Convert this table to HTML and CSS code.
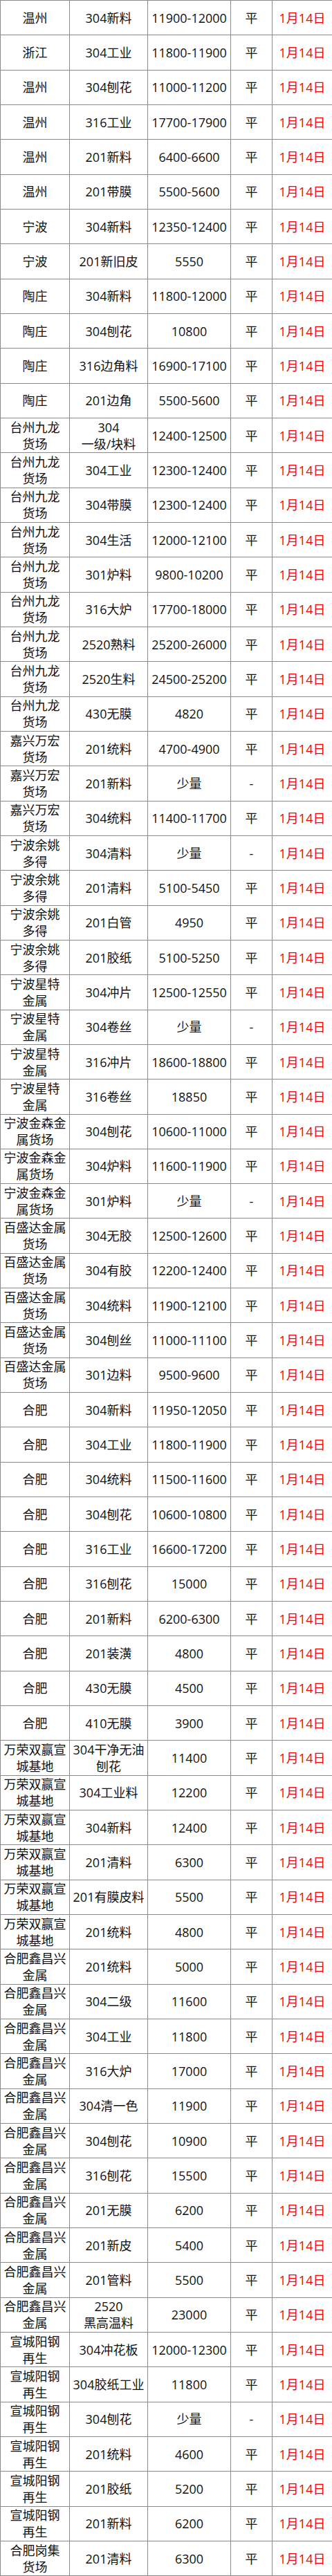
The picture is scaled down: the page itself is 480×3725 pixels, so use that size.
FILE: index.html
```html
<!DOCTYPE html>
<html lang="zh-CN">
<head>
<meta charset="utf-8">
<title>不锈钢废料价格</title>
<link rel="stylesheet" href="styles.css">
</head>
<body>
<table class="price-table">
<colgroup>
<col class="c-loc"><col class="c-prod"><col class="c-price"><col class="c-chg"><col class="c-date">
</colgroup>
<tbody>
<tr><td>温州</td><td>304新料</td><td>11900-12000</td><td>平</td><td class="date">1月14日</td></tr>
<tr><td>浙江</td><td>304工业</td><td>11800-11900</td><td>平</td><td class="date">1月14日</td></tr>
<tr><td>温州</td><td>304刨花</td><td>11000-11200</td><td>平</td><td class="date">1月14日</td></tr>
<tr><td>温州</td><td>316工业</td><td>17700-17900</td><td>平</td><td class="date">1月14日</td></tr>
<tr><td>温州</td><td>201新料</td><td>6400-6600</td><td>平</td><td class="date">1月14日</td></tr>
<tr><td>温州</td><td>201带膜</td><td>5500-5600</td><td>平</td><td class="date">1月14日</td></tr>
<tr><td>宁波</td><td>304新料</td><td>12350-12400</td><td>平</td><td class="date">1月14日</td></tr>
<tr><td>宁波</td><td>201新旧皮</td><td>5550</td><td>平</td><td class="date">1月14日</td></tr>
<tr><td>陶庄</td><td>304新料</td><td>11800-12000</td><td>平</td><td class="date">1月14日</td></tr>
<tr><td>陶庄</td><td>304刨花</td><td>10800</td><td>平</td><td class="date">1月14日</td></tr>
<tr><td>陶庄</td><td>316边角料</td><td>16900-17100</td><td>平</td><td class="date">1月14日</td></tr>
<tr><td>陶庄</td><td>201边角</td><td>5500-5600</td><td>平</td><td class="date">1月14日</td></tr>
<tr><td>台州九龙<br>货场</td><td>304<br>一级/块料</td><td>12400-12500</td><td>平</td><td class="date">1月14日</td></tr>
<tr><td>台州九龙<br>货场</td><td>304工业</td><td>12300-12400</td><td>平</td><td class="date">1月14日</td></tr>
<tr><td>台州九龙<br>货场</td><td>304带膜</td><td>12300-12400</td><td>平</td><td class="date">1月14日</td></tr>
<tr><td>台州九龙<br>货场</td><td>304生活</td><td>12000-12100</td><td>平</td><td class="date">1月14日</td></tr>
<tr><td>台州九龙<br>货场</td><td>301炉料</td><td>9800-10200</td><td>平</td><td class="date">1月14日</td></tr>
<tr><td>台州九龙<br>货场</td><td>316大炉</td><td>17700-18000</td><td>平</td><td class="date">1月14日</td></tr>
<tr><td>台州九龙<br>货场</td><td>2520熟料</td><td>25200-26000</td><td>平</td><td class="date">1月14日</td></tr>
<tr><td>台州九龙<br>货场</td><td>2520生料</td><td>24500-25200</td><td>平</td><td class="date">1月14日</td></tr>
<tr><td>台州九龙<br>货场</td><td>430无膜</td><td>4820</td><td>平</td><td class="date">1月14日</td></tr>
<tr><td>嘉兴万宏<br>货场</td><td>201统料</td><td>4700-4900</td><td>平</td><td class="date">1月14日</td></tr>
<tr><td>嘉兴万宏<br>货场</td><td>201新料</td><td>少量</td><td>-</td><td class="date">1月14日</td></tr>
<tr><td>嘉兴万宏<br>货场</td><td>304统料</td><td>11400-11700</td><td>平</td><td class="date">1月14日</td></tr>
<tr><td>宁波余姚<br>多得</td><td>304清料</td><td>少量</td><td>-</td><td class="date">1月14日</td></tr>
<tr><td>宁波余姚<br>多得</td><td>201清料</td><td>5100-5450</td><td>平</td><td class="date">1月14日</td></tr>
<tr><td>宁波余姚<br>多得</td><td>201白管</td><td>4950</td><td>平</td><td class="date">1月14日</td></tr>
<tr><td>宁波余姚<br>多得</td><td>201胶纸</td><td>5100-5250</td><td>平</td><td class="date">1月14日</td></tr>
<tr><td>宁波星特<br>金属</td><td>304冲片</td><td>12500-12550</td><td>平</td><td class="date">1月14日</td></tr>
<tr><td>宁波星特<br>金属</td><td>304卷丝</td><td>少量</td><td>-</td><td class="date">1月14日</td></tr>
<tr><td>宁波星特<br>金属</td><td>316冲片</td><td>18600-18800</td><td>平</td><td class="date">1月14日</td></tr>
<tr><td>宁波星特<br>金属</td><td>316卷丝</td><td>18850</td><td>平</td><td class="date">1月14日</td></tr>
<tr><td>宁波金森金<br>属货场</td><td>304刨花</td><td>10600-11000</td><td>平</td><td class="date">1月14日</td></tr>
<tr><td>宁波金森金<br>属货场</td><td>304炉料</td><td>11600-11900</td><td>平</td><td class="date">1月14日</td></tr>
<tr><td>宁波金森金<br>属货场</td><td>301炉料</td><td>少量</td><td>-</td><td class="date">1月14日</td></tr>
<tr><td>百盛达金属<br>货场</td><td>304无胶</td><td>12500-12600</td><td>平</td><td class="date">1月14日</td></tr>
<tr><td>百盛达金属<br>货场</td><td>304有胶</td><td>12200-12400</td><td>平</td><td class="date">1月14日</td></tr>
<tr><td>百盛达金属<br>货场</td><td>304统料</td><td>11900-12100</td><td>平</td><td class="date">1月14日</td></tr>
<tr><td>百盛达金属<br>货场</td><td>304刨丝</td><td>11000-11100</td><td>平</td><td class="date">1月14日</td></tr>
<tr><td>百盛达金属<br>货场</td><td>301边料</td><td>9500-9600</td><td>平</td><td class="date">1月14日</td></tr>
<tr><td>合肥</td><td>304新料</td><td>11950-12050</td><td>平</td><td class="date">1月14日</td></tr>
<tr><td>合肥</td><td>304工业</td><td>11800-11900</td><td>平</td><td class="date">1月14日</td></tr>
<tr><td>合肥</td><td>304统料</td><td>11500-11600</td><td>平</td><td class="date">1月14日</td></tr>
<tr><td>合肥</td><td>304刨花</td><td>10600-10800</td><td>平</td><td class="date">1月14日</td></tr>
<tr><td>合肥</td><td>316工业</td><td>16600-17200</td><td>平</td><td class="date">1月14日</td></tr>
<tr><td>合肥</td><td>316刨花</td><td>15000</td><td>平</td><td class="date">1月14日</td></tr>
<tr><td>合肥</td><td>201新料</td><td>6200-6300</td><td>平</td><td class="date">1月14日</td></tr>
<tr><td>合肥</td><td>201装潢</td><td>4800</td><td>平</td><td class="date">1月14日</td></tr>
<tr><td>合肥</td><td>430无膜</td><td>4500</td><td>平</td><td class="date">1月14日</td></tr>
<tr><td>合肥</td><td>410无膜</td><td>3900</td><td>平</td><td class="date">1月14日</td></tr>
<tr><td>万荣双赢宣<br>城基地</td><td>304干净无油<br>刨花</td><td>11400</td><td>平</td><td class="date">1月14日</td></tr>
<tr><td>万荣双赢宣<br>城基地</td><td>304工业料</td><td>12200</td><td>平</td><td class="date">1月14日</td></tr>
<tr><td>万荣双赢宣<br>城基地</td><td>304新料</td><td>12400</td><td>平</td><td class="date">1月14日</td></tr>
<tr><td>万荣双赢宣<br>城基地</td><td>201清料</td><td>6300</td><td>平</td><td class="date">1月14日</td></tr>
<tr><td>万荣双赢宣<br>城基地</td><td>201有膜皮料</td><td>5500</td><td>平</td><td class="date">1月14日</td></tr>
<tr><td>万荣双赢宣<br>城基地</td><td>201统料</td><td>4800</td><td>平</td><td class="date">1月14日</td></tr>
<tr><td>合肥鑫昌兴<br>金属</td><td>201统料</td><td>5000</td><td>平</td><td class="date">1月14日</td></tr>
<tr><td>合肥鑫昌兴<br>金属</td><td>304二级</td><td>11600</td><td>平</td><td class="date">1月14日</td></tr>
<tr><td>合肥鑫昌兴<br>金属</td><td>304工业</td><td>11800</td><td>平</td><td class="date">1月14日</td></tr>
<tr><td>合肥鑫昌兴<br>金属</td><td>316大炉</td><td>17000</td><td>平</td><td class="date">1月14日</td></tr>
<tr><td>合肥鑫昌兴<br>金属</td><td>304清一色</td><td>11900</td><td>平</td><td class="date">1月14日</td></tr>
<tr><td>合肥鑫昌兴<br>金属</td><td>304刨花</td><td>10900</td><td>平</td><td class="date">1月14日</td></tr>
<tr><td>合肥鑫昌兴<br>金属</td><td>316刨花</td><td>15500</td><td>平</td><td class="date">1月14日</td></tr>
<tr><td>合肥鑫昌兴<br>金属</td><td>201无膜</td><td>6200</td><td>平</td><td class="date">1月14日</td></tr>
<tr><td>合肥鑫昌兴<br>金属</td><td>201新皮</td><td>5400</td><td>平</td><td class="date">1月14日</td></tr>
<tr><td>合肥鑫昌兴<br>金属</td><td>201管料</td><td>5500</td><td>平</td><td class="date">1月14日</td></tr>
<tr><td>合肥鑫昌兴<br>金属</td><td>2520<br>黑高温料</td><td>23000</td><td>平</td><td class="date">1月14日</td></tr>
<tr><td>宣城阳钢<br>再生</td><td>304冲花板</td><td>12000-12300</td><td>平</td><td class="date">1月14日</td></tr>
<tr><td>宣城阳钢<br>再生</td><td>304胶纸工业</td><td>11800</td><td>平</td><td class="date">1月14日</td></tr>
<tr><td>宣城阳钢<br>再生</td><td>304刨花</td><td>少量</td><td>-</td><td class="date">1月14日</td></tr>
<tr><td>宣城阳钢<br>再生</td><td>201统料</td><td>4600</td><td>平</td><td class="date">1月14日</td></tr>
<tr><td>宣城阳钢<br>再生</td><td>201胶纸</td><td>5200</td><td>平</td><td class="date">1月14日</td></tr>
<tr><td>宣城阳钢<br>再生</td><td>201新料</td><td>6200</td><td>平</td><td class="date">1月14日</td></tr>
<tr><td>合肥岗集<br>货场</td><td>201清料</td><td>6300</td><td>平</td><td class="date">1月14日</td></tr>
</tbody>
</table>
</body>
</html>
```

FILE: styles.css
```css
html, body {
  margin: 0;
  padding: 0;
  background: #ffffff;
}

body {
  font-family: "Open Sans", "Noto Sans CJK SC", sans-serif;
  font-size: 18px;
  color: #111111;
}

.price-table {
  width: 480px;
  border-collapse: collapse;
  table-layout: fixed;
}

.c-loc { width: 100px; }
.c-prod { width: 113px; }
.c-price { width: 120px; }
.c-chg { width: 60px; }
.c-date { width: 87px; }

.price-table tr {
  height: 50.33px;
}

.price-table td {
  border: 1px solid #8a8a8a;
  padding: 0;
  text-align: center;
  vertical-align: middle;
  line-height: 24px;
  white-space: nowrap;
  overflow: hidden;
}

.price-table td.date {
  color: #ff0000;
}
```
